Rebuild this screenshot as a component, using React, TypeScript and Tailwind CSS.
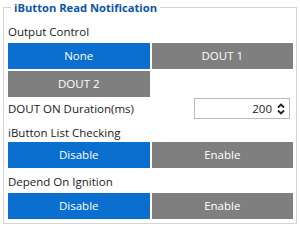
import type { ReactNode } from "react";

const font = { fontFamily: '"Open Sans", "Noto Sans", sans-serif' };

function Btn({ active, children }: { active?: boolean; children: ReactNode }) {
  return (
    <div
      className={`h-[26px] flex items-center justify-center text-[11.5px] text-white ${
        active ? "bg-[#0a6fce]" : "bg-[#7f7f7f]"
      }`}
    >
      {children}
    </div>
  );
}

function SpinIcon() {
  return (
    <svg width="8" height="12" viewBox="0 0 8 12" fill="none" stroke="#222" strokeWidth="1.8">
      <path d="M1 4.5 L4 1.5 L7 4.5" />
      <path d="M1 7.5 L4 10.5 L7 7.5" />
    </svg>
  );
}

export default function App() {
  return (
    <div className="w-[300px] h-[232px] bg-white text-[#1a1a1a] pt-[1px]" style={font}>
      <fieldset className="ml-[3px] w-[294px] border border-[#d4d4d4] pl-[4px] pr-[3px] pb-[4px]">
        <legend className="ml-[3px] px-[3px] leading-[13px] text-[11.2px] font-bold text-[#0d55a5]">
          iButton Read Notification
        </legend>
        <div className="pt-[10px] h-[16px] box-content leading-[16px] text-[11.5px] mb-[3px]">Output Control</div>
        <div className="grid grid-cols-2 gap-[2px]">
          <Btn active>None</Btn>
          <Btn>DOUT 1</Btn>
          <Btn>DOUT 2</Btn>
        </div>
        <div className="mt-[1px] h-[21px] flex items-center justify-between text-[11.5px]">
          <span>DOUT ON Duration(ms)</span>
          <div className="mr-[3px] w-[96px] h-[21px] border border-[#b9b9b9] flex items-center justify-end gap-[5px] pr-[4px]">
            <span>200</span>
            <SpinIcon />
          </div>
        </div>
        <div className="mt-[6px] h-[16px] leading-[16px] text-[11.5px] mb-[1px]">iButton List Checking</div>
        <div className="grid grid-cols-2 gap-[2px]">
          <Btn active>Disable</Btn>
          <Btn>Enable</Btn>
        </div>
        <div className="mt-[6px] h-[16px] leading-[16px] text-[11.5px] mb-[3px]">Depend On Ignition</div>
        <div className="grid grid-cols-2 gap-[2px]">
          <Btn active>Disable</Btn>
          <Btn>Enable</Btn>
        </div>
      </fieldset>
    </div>
  );
}
